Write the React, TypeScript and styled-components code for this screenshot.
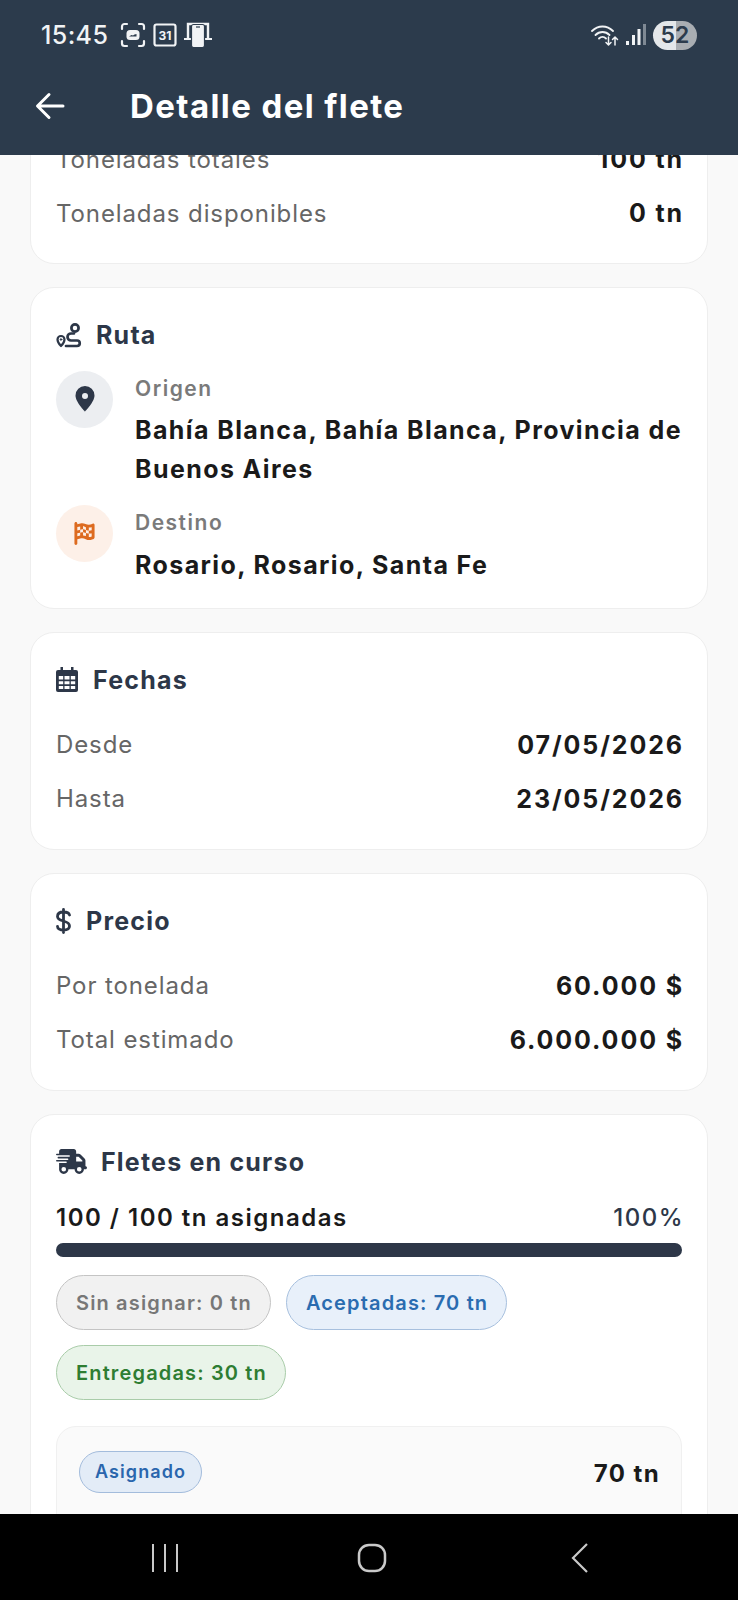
import React from "react";
import styled, { createGlobalStyle } from "styled-components";
import { FaFlagCheckered, FaTruckFast } from "react-icons/fa6";

const Global = createGlobalStyle`
  html, body { margin: 0; padding: 0; background: #f9f9f9; }
  * { box-sizing: border-box; }
  body { font-family: "Inter", "Liberation Sans", sans-serif; }
`;
const Screen = styled.div`
  width: 738px; height: 1600px; display: flex; flex-direction: column; overflow: hidden; background: #f9f9f9;
`;
const Header = styled.header`
  height: 155px; flex: none; background: #2c3b4c; color: #fff; display: flex; flex-direction: column;
`;
const StatusBar = styled.div`
  height: 70px; padding: 0 41px; display: flex; align-items: center; justify-content: space-between;
`;
const Time = styled.span`
  font-size: 25px; font-weight: 500; color: #f1f3f5; margin-right: 5px; letter-spacing: 0.4px;
`;
const StatusGroup = styled.div`
  display: flex; align-items: center; gap: 7px;
`;
const Battery = styled.div`
  width: 44px; height: 29px; border-radius: 15px; background: linear-gradient(90deg, #e4e7ea 0 52%, #a9adb2 52%);
  color: #2c3b4c; font-size: 23px; font-weight: 600; display: flex; align-items: center; justify-content: center;
`;
const NavRow = styled.div`
  height: 72px; padding-left: 35px; display: flex; align-items: center; gap: 65px;
`;
const Title = styled.h1`
  margin: 0; font-size: 33px; line-height: 40px; font-weight: 700; color: #fff; letter-spacing: 1.4px; white-space: nowrap;
`;
const Scroll = styled.main`
  flex: 1; overflow: hidden; min-height: 0;
`;
const Content = styled.div`
  margin-top: -81px; padding: 0 30px; display: flex; flex-direction: column; gap: 23px;
`;
const Card = styled.section`
  background: #fff; border: 1.5px solid #eeeeee; border-radius: 24px; padding: 32px 25px 23px;
`;
const CardTitle = styled.div<{ $gap: number }>`
  display: flex; align-items: center; gap: ${(p) => p.$gap}px; height: 30px; color: #2d3748;
  font-size: 25px; font-weight: 700; letter-spacing: 1.2px;
`;
const Row = styled.div`
  display: flex; justify-content: space-between; align-items: center; height: 54px;
`;
const RowLabel = styled.span`
  font-size: 24px; color: #666; font-weight: 400; letter-spacing: 0.9px;
`;
const RowValue = styled.span`
  font-size: 25px; color: #1a1a1a; font-weight: 700; letter-spacing: 1.9px; margin-right: -2px;
`;
const Rows = styled.div<{ $top: number }>`
  margin-top: ${(p) => p.$top}px;
`;
const Place = styled.div<{ $top: number }>`
  display: flex; gap: 22px; margin-top: ${(p) => p.$top}px;
`;
const PlaceIcon = styled.div<{ $bg: string }>`
  width: 57px; height: 57px; flex: none; border-radius: 50%; background: ${(p) => p.$bg};
  display: flex; align-items: center; justify-content: center;
`;
const PlaceBody = styled.div`
  flex: 1; min-width: 0; padding-top: 1px;
`;
const PlaceLabel = styled.div`
  font-size: 21px; font-weight: 600; color: #7a7a7a; line-height: 34px; letter-spacing: 1.5px;
`;
const PlaceValue = styled.div`
  font-size: 25px; font-weight: 650; color: #1a1a1a; line-height: 39px; margin-top: 5.5px; letter-spacing: 1.4px;
  margin-right: -6px;
`;
const ProgressHead = styled.div`
  display: flex; justify-content: space-between; align-items: center; height: 32px; margin-top: 24.5px;
`;
const ProgressText = styled.span`
  font-size: 24px; font-weight: 600; color: #1a1a1a; letter-spacing: 1.5px;
`;
const ProgressPct = styled.span`
  font-size: 24px; font-weight: 500; color: #2d3748; letter-spacing: 1.5px; margin-right: -2px;
`;
const Bar = styled.div`
  height: 14px; background: #2d3748; border-radius: 7px; margin-top: 10px;
`;
const Chips = styled.div`
  display: flex; flex-wrap: wrap; gap: 15px; margin-top: 18px;
`;
const Chip = styled.span<{ $bg: string; $bd: string; $fg: string }>`
  height: 55px; padding: 0 18px 0 19px; border-radius: 28px; display: inline-flex; align-items: center;
  background: ${(p) => p.$bg}; border: 1.8px solid ${(p) => p.$bd}; color: ${(p) => p.$fg};
  font-size: 20px; font-weight: 600; letter-spacing: 1.15px;
`;
const Inner = styled.div`
  margin-top: 26px; background: #fafafa; border: 1.5px solid #f0f0f0; border-radius: 20px; padding: 23.5px 22px 30px;
  display: flex; justify-content: space-between; align-items: flex-start; height: 160px;
`;
const Pill = styled.span`
  height: 42px; padding: 0 15px; border-radius: 21px; background: #e3ecf7; border: 1.8px solid #a3bcdc; color: #2a66ad;
  font-size: 18px; font-weight: 600; display: inline-flex; align-items: center; letter-spacing: 1.1px;
`;
const InnerValue = styled.span`
  font-size: 24px; font-weight: 700; color: #1a1a1a; line-height: 46px; letter-spacing: 1.4px; margin-right: -1px;
`;
const BottomNav = styled.nav`
  height: 86px; flex: none; background: #000; display: grid; grid-template-columns: repeat(3, 207px);
  justify-content: center; align-items: center; padding: 2px 0 0 6px;
`;
const NavSlot = styled.div`
  display: flex; justify-content: center;
`;

const Ink = "#2d3748";
const Light = "#f1f3f5";

const App: React.FC = () => (
  <Screen>
    <Global />
    <Header>
      <StatusBar>
        <StatusGroup>
          <Time>15:45</Time>
          <svg width="26" height="26" viewBox="0 0 26 26" fill="none" stroke={Light} strokeWidth="2.200" strokeLinecap="round">
            <path d="M2 7V4.500A2.500 2.500 0 0 1 4.500 2H7M19 2h2.500A2.500 2.500 0 0 1 24 4.500V7M24 19v2.500a2.500 2.500 0 0 1-2.500 2.500H19M7 24H4.500A2.500 2.500 0 0 1 2 21.500V19" />
            <rect x="6.500" y="8" width="13" height="10" rx="3.500" fill={Light} stroke="none" />
            <path d="M9 14.500h7.500v-2.500l-2 .5-1.500 1-1.500-.5z" fill="#2c3b4c" stroke="none" />
          </svg>
          <svg width="24" height="24" viewBox="0 0 24 24" fill="none">
            <rect x="1.500" y="1.500" width="21" height="21" rx="2" stroke={Light} strokeWidth="2.200" />
            <text x="12" y="16.500" fill={Light} fontSize="12" fontWeight="700" textAnchor="middle" fontFamily="Inter">31</text>
          </svg>
          <svg width="28" height="26" viewBox="0 0 28 26" fill="none">
            <path d="M4 16V2h20v14" stroke={Light} strokeWidth="2.400" />
            <path d="M0 17h7M21 17h7" stroke={Light} strokeWidth="2" />
            <rect x="7.500" y="2.500" width="13" height="23" rx="2" fill={Light} stroke="#2c3b4c" strokeWidth="1.200" />
            <path d="M12 5h4" stroke="#2c3b4c" strokeWidth="1.200" />
          </svg>
        </StatusGroup>
        <StatusGroup>
          <svg width="28" height="24" viewBox="0 0 28 24" fill="none" stroke={Light} strokeWidth="1.800" strokeLinecap="round">
            <path d="M1 8c6-6 15-6 21 0M4.500 12c4-4 10-4 14 0M8 15.500c2-2 5-2 7 0" />
            <path d="M17.500 14v8M15 19.500l2.500 2.500 2.500-2.500M24 22v-8M21.500 16.500l2.500-2.500 2.500 2.500" strokeWidth="1.500" />
          </svg>
          <svg width="20" height="22" viewBox="0 0 20 22" fill={Light}>
            <rect x="0" y="17" width="3" height="4" />
            <rect x="6" y="11" width="3" height="10" />
            <rect x="11.500" y="5" width="3" height="16" />
            <rect x="17" y="0" width="3" height="21" fill="#7f8994" />
          </svg>
          <Battery>52</Battery>
        </StatusGroup>
      </StatusBar>
      <NavRow>
        <svg width="30" height="30" viewBox="0 0 30 30" fill="none" stroke="#fff" strokeWidth="3" strokeLinecap="round" strokeLinejoin="round">
          <path d="M28 15H3M14 3.500 2.500 15 14 26.500" />
        </svg>
        <Title>Detalle del flete</Title>
      </NavRow>
    </Header>
    <Scroll>
      <Content>
        <Card>
          <Rows $top={25}>
            <Row><RowLabel>Toneladas totales</RowLabel><RowValue>100 tn</RowValue></Row>
            <Row><RowLabel>Toneladas disponibles</RowLabel><RowValue>0 tn</RowValue></Row>
          </Rows>
        </Card>
        <Card>
          <CardTitle $gap={14}>
            <svg width="26" height="25" viewBox="0 0 26 25" fill="none" stroke={Ink} strokeWidth="2.700" strokeLinecap="round" strokeLinejoin="round">
              <circle cx="19" cy="5" r="3.600" />
              <path d="M18 10.500H15a3.500 3.500 0 0 0 0 7h6a2.700 2.700 0 0 1 0 5.500H10" />
              <path d="M5 23S1.500 19.500 1.500 16.500a3.500 3.500 0 0 1 7 0C8.500 19.500 5 23 5 23z" strokeWidth="2.200" />
              <circle cx="5" cy="16.500" r="0.800" fill={Ink} strokeWidth="1" />
            </svg>
            Ruta
          </CardTitle>
          <Place $top={20.5}>
            <PlaceIcon $bg="#eceef1">
              <svg width="20" height="26" viewBox="0 0 20 26">
                <path fillRule="evenodd" fill={Ink} d="M10 0a9.500 9.500 0 0 1 9.500 9.500C19.500 16 10 25.500 10 25.500S.5 16 .5 9.500A9.500 9.500 0 0 1 10 0zm0 7a3 3 0 1 0 0 6 3 3 0 0 0 0-6z" />
              </svg>
            </PlaceIcon>
            <PlaceBody>
              <PlaceLabel>Origen</PlaceLabel>
              <PlaceValue>Bahía Blanca, Bahía Blanca, Provincia de Buenos Aires</PlaceValue>
            </PlaceBody>
          </Place>
          <Place $top={16}>
            <PlaceIcon $bg="#fdf0e8">
              <FaFlagCheckered size={23} color="#dd6b20" />
            </PlaceIcon>
            <PlaceBody>
              <PlaceLabel>Destino</PlaceLabel>
              <PlaceValue>Rosario, Rosario, Santa Fe</PlaceValue>
            </PlaceBody>
          </Place>
        </Card>
        <Card>
          <CardTitle $gap={15}>
            <svg width="22" height="25" viewBox="0 0 22 25">
              <path fill={Ink} fillRule="evenodd" d="M4.500 0h2.500v3h8V0h2.500v3H20a2 2 0 0 1 2 2v18a2 2 0 0 1-2 2H2a2 2 0 0 1-2-2V5a2 2 0 0 1 2-2h2.500zM2.800 9v3.500h4.400V9zm5.700 0v3.500h5V9zm6.300 0v3.500h4.400V9zM2.800 14.200v3h4.400v-3zm5.700 0v3h5v-3zm6.300 0v3h4.400v-3zM2.800 19v3h4.400v-3zm5.700 0v3h5v-3zm6.300 0v3h4.400v-3z" />
            </svg>
            Fechas
          </CardTitle>
          <Rows $top={23}>
            <Row><RowLabel>Desde</RowLabel><RowValue>07/05/2026</RowValue></Row>
            <Row><RowLabel>Hasta</RowLabel><RowValue>23/05/2026</RowValue></Row>
          </Rows>
        </Card>
        <Card>
          <CardTitle $gap={15}>
            <svg width="15" height="26" viewBox="0 0 15 26" fill="none" stroke={Ink} strokeWidth="2.800" strokeLinecap="round">
              <path d="M7.500 1.500v23M13.500 7C13 5 11 4 7.500 4 4 4 1.500 5.500 1.500 8.500c0 6 12 3 12 9.500 0 2.500-2.500 4-6 4S1.500 20.500 1.500 18.500" />
            </svg>
            Precio
          </CardTitle>
          <Rows $top={23}>
            <Row><RowLabel>Por tonelada</RowLabel><RowValue>60.000 $</RowValue></Row>
            <Row><RowLabel>Total estimado</RowLabel><RowValue>6.000.000 $</RowValue></Row>
          </Rows>
        </Card>
        <Card>
          <CardTitle $gap={14}>
            <FaTruckFast size={31} color={Ink} />
            Fletes en curso
          </CardTitle>
          <ProgressHead>
            <ProgressText>100 / 100 tn asignadas</ProgressText>
            <ProgressPct>100%</ProgressPct>
          </ProgressHead>
          <Bar />
          <Chips>
            <Chip $bg="#f1f1f1" $bd="#c4c4c4" $fg="#777">Sin asignar: 0 tn</Chip>
            <Chip $bg="#e8f0fa" $bd="#a7c0de" $fg="#2a6cb0">Aceptadas: 70 tn</Chip>
            <Chip $bg="#e9f4e9" $bd="#a9cca9" $fg="#2e7d32">Entregadas: 30 tn</Chip>
          </Chips>
          <Inner>
            <Pill>Asignado</Pill>
            <InnerValue>70 tn</InnerValue>
          </Inner>
        </Card>
      </Content>
    </Scroll>
    <BottomNav>
      <NavSlot>
        <svg width="28" height="28" viewBox="0 0 28 28" fill="none" stroke="#c9c9c9" strokeWidth="2">
          <path d="M2 0v28M14 0v28M26 0v28" />
        </svg>
      </NavSlot>
      <NavSlot>
        <svg width="30" height="30" viewBox="0 0 30 30" fill="none" stroke="#c9c9c9" strokeWidth="2.500">
          <rect x="2" y="2" width="26" height="26" rx="10" />
        </svg>
      </NavSlot>
      <NavSlot>
        <svg width="20" height="30" viewBox="0 0 20 30" fill="none" stroke="#c9c9c9" strokeWidth="2.200">
          <path d="M18 1 4 15l14 14" />
        </svg>
      </NavSlot>
    </BottomNav>
  </Screen>
);

export default App;
